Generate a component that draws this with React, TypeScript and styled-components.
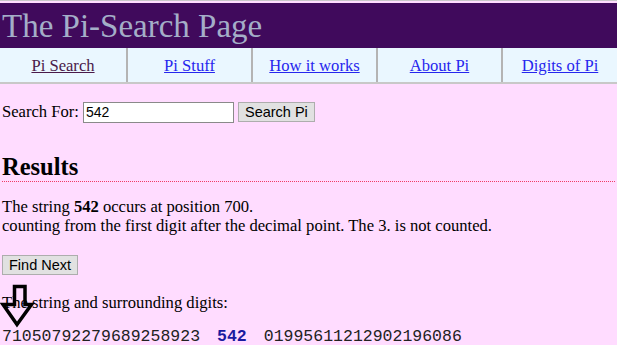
import React, { useState } from "react";
import { createGlobalStyle, styled } from "styled-components";

const navItems = [
  { label: "Pi Search", visited: true },
  { label: "Pi Stuff", visited: false },
  { label: "How it works", visited: false },
  { label: "About Pi", visited: false },
  { label: "Digits of Pi", visited: false }
];

const GlobalStyle = createGlobalStyle`
  html, body {
    margin: 0;
    padding: 0;
    background: #ffdcff;
  }
  body {
    font-family: "Liberation Serif", "Times New Roman", serif;
    font-size: 16.6px;
    color: #000;
  }
`;

const Page = () => {
  const [query, setQuery] = useState("542");

  return (
    <>
      <GlobalStyle />
      <Page_div>
        <Header_div>
          <Title_h1>The Pi-Search Page</Title_h1>
        </Header_div>
        <Nav_ul>
          {navItems.map((item, index) => (
            <NavCell_li key={index}>
              <NavLink_a href="#" $visited={item.visited}>
                {item.label}
              </NavLink_a>
            </NavCell_li>
          ))}
        </Nav_ul>

        <Content_div>
          <SearchForm_form onSubmit={(e) => e.preventDefault()}>
            <span>Search For:</span>
            <SearchInput_input
              value={query}
              onChange={(e) => setQuery(e.target.value)}
            />
            <GreyButton_button type="submit">Search Pi</GreyButton_button>
          </SearchForm_form>

          <Results_h2>Results</Results_h2>

          <Text_p>
            The string <b>542</b> occurs at position 700.
            <br />
            counting from the first digit after the decimal point. The 3. is not
            counted.
          </Text_p>

          <ButtonRow_div>
            <GreyButton_button type="button">Find Next</GreyButton_button>
          </ButtonRow_div>

          <DigitsBlock_div>
            {/* hand drawn pointer arrow over the digits */}
            <Arrow_svg width="36" height="46" viewBox="0 0 36 46">
              <path
                d="M14.5 3.5 H25 V21.5 H31.5 L17 41.5 L3 21.5 H14.5 Z"
                fill="none"
                stroke="#000"
                strokeWidth="3.5"
                strokeLinejoin="miter"
              />
            </Arrow_svg>
            <Caption_p>The string and surrounding digits:</Caption_p>
            <Digits_div>
              {"71050792279689258923"}
              <Match_b>542</Match_b>
              {"01995611212902196086"}
            </Digits_div>
          </DigitsBlock_div>
        </Content_div>
      </Page_div>
    </>
  );
};

export default Page;

const Page_div = styled.div`
  border-top: 1px solid #c8c8c8;
  padding-top: 2px;
`;

const Header_div = styled.div`
  background: #400a5c;
  height: 45px;
  display: flex;
  align-items: center;
`;

const Title_h1 = styled.h1`
  margin: 0 0 0 2px;
  font-weight: normal;
  font-size: 33px;
  color: #a4aec8;
  line-height: 1;
  padding-top: 2px;
`;

const Nav_ul = styled.ul`
  list-style: none;
  margin: 0;
  padding: 0;
  display: grid;
  grid-template-columns: 126px 125px 125px 125px 1fr;
  background: #eaf7ff;
  border-bottom: 2px solid #c8c8c8;
`;

const NavCell_li = styled.li`
  box-sizing: border-box;
  height: 34px;
  padding-top: 2px;
  display: flex;
  align-items: center;
  justify-content: center;
  &:not(:first-child) {
    border-left: 2px solid #b4b4b4;
  }
`;

const NavLink_a = styled.a<{ $visited: boolean }>`
  color: ${({ $visited }) => ($visited ? "#4a1a4a" : "#2626ee")};
  font-size: 16.6px;
  text-decoration: underline;
`;

const Content_div = styled.div`
  padding: 17px 2px 0 2px;
`;

const SearchForm_form = styled.form`
  display: flex;
  align-items: center;
  gap: 4px;
  height: 22px;
`;

const SearchInput_input = styled.input`
  width: 145px;
  height: 17px;
  padding: 1px 2px;
  border: 1px solid #8a8a8a;
  font-family: "Liberation Sans", Arial, sans-serif;
  font-size: 14px;
  color: #000;
  background: #fff;
`;

const GreyButton_button = styled.button`
  font-family: "Liberation Sans", Arial, sans-serif;
  font-size: 14.5px;
  color: #000;
  background: #e1e1e1;
  border: 1px solid #adadad;
  padding: 0 6px;
  height: 20px;
`;

const Results_h2 = styled.h2`
  margin: 30px 0 0 0;
  font-size: 24.5px;
  line-height: 28px;
  font-weight: bold;
  border-bottom: 1px dotted #f03c64;
`;

const Text_p = styled.p`
  margin: 15px 0 0;
  line-height: 19px;
`;

const ButtonRow_div = styled.div`
  margin-top: 20px;
  height: 20px;
  display: flex;
`;

const DigitsBlock_div = styled.div`
  position: relative;
  margin-top: 18px;
`;

const Caption_p = styled.p`
  margin: 0;
  line-height: 19px;
`;

const Arrow_svg = styled.svg`
  position: absolute;
  left: -2px;
  top: -10px;
`;

const Digits_div = styled.div`
  font-family: "Liberation Mono", "Courier New", monospace;
  font-size: 16.5px;
  line-height: 19px;
  white-space: pre;
  color: #222;
  margin-top: 15px;
`;

const Match_b = styled.b`
  color: #1a1aa0;
  padding: 0 17px;
`;
